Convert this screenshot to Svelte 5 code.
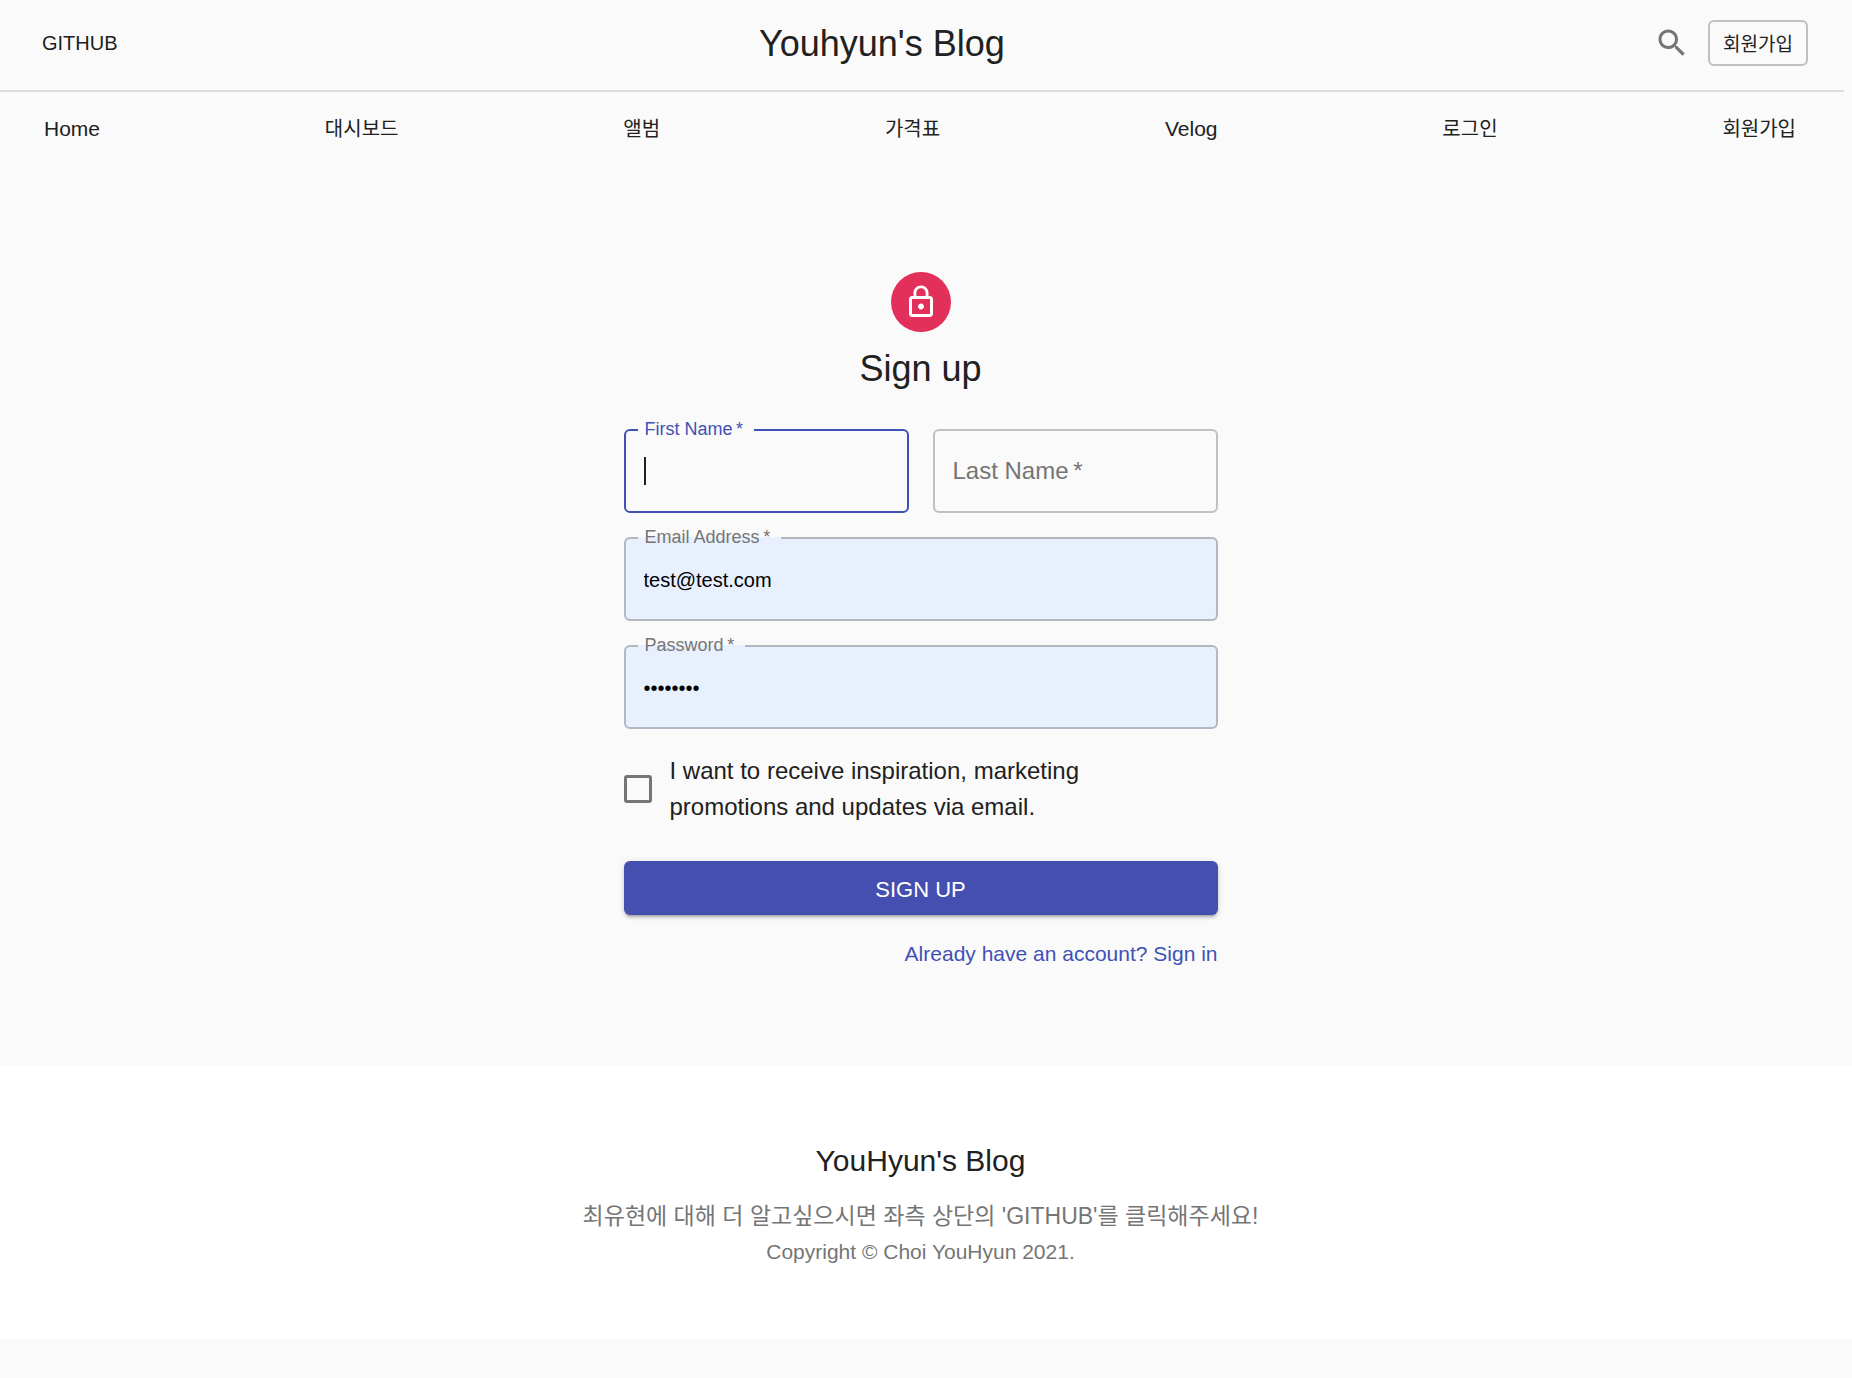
<script>
  const links = [
    { text: 'Home', ko: false },
    { text: '대시보드', ko: true },
    { text: '앨범', ko: true },
    { text: '가격표', ko: true },
    { text: 'Velog', ko: false },
    { text: '로그인', ko: true },
    { text: '회원가입', ko: true }
  ];
  let lastName = $state('');
</script>

<div class="page">
  <header class="toolbar">
    <button type="button" class="text-button">GITHUB</button>
    <h2 class="brand">Youhyun's Blog</h2>
    <button type="button" class="icon-button" aria-label="Search">
      <svg viewBox="0 0 24 24" width="36" height="36" aria-hidden="true">
        <path d="M15.5 14h-.79l-.28-.27C15.41 12.59 16 11.11 16 9.5 16 5.91 13.09 3 9.5 3S3 5.91 3 9.5 5.91 16 9.5 16c1.61 0 3.09-.59 4.23-1.57l.27.28v.79l5 4.99L20.49 19l-4.99-5zm-6 0C7.01 14 5 11.99 5 9.5S7.01 5 9.5 5 14 7.01 14 9.5 11.99 14 9.5 14z" />
      </svg>
    </button>
    <button type="button" class="outline-button">회원가입</button>
  </header>

  <nav class="sections">
    {#each links as link}
      <a href="#top" class:ko={link.ko}>{link.text}</a>
    {/each}
  </nav>

  <main>
    <div class="avatar">
      <svg viewBox="0 0 24 24" width="36" height="36" aria-hidden="true">
        <path d="M12 17c1.1 0 2-.9 2-2s-.9-2-2-2-2 .9-2 2 .9 2 2 2zm6-9h-1V6c0-2.76-2.24-5-5-5S7 3.24 7 6v2H6c-1.1 0-2 .9-2 2v10c0 1.1.9 2 2 2h12c1.1 0 2-.9 2-2V10c0-1.1-.9-2-2-2zM8.9 6c0-1.71 1.39-3.1 3.1-3.1s3.1 1.39 3.1 3.1v2H8.9V6zM18 20H6V10h12v10z" />
      </svg>
    </div>
    <h1>Sign up</h1>

    <form onsubmit={(e) => e.preventDefault()}>
      <div class="fields">
        <fieldset class="field focused">
          <legend><label for="first">First Name&thinsp;*</label></legend>
          <input id="first" type="text" autocomplete="off" />
          <span class="caret"></span>
        </fieldset>
        <div class="field plain">
          <input id="last" type="text" autocomplete="off" bind:value={lastName} />
          <label for="last" class:hidden={lastName !== ''}>Last Name&thinsp;*</label>
        </div>
        <fieldset class="field wide filled">
          <legend><label for="email">Email Address&thinsp;*</label></legend>
          <input id="email" type="email" value="test@test.com" autocomplete="off" />
        </fieldset>
        <fieldset class="field wide filled">
          <legend><label for="password">Password&thinsp;*</label></legend>
          <input id="password" type="password" value="testtest" autocomplete="off" />
        </fieldset>
      </div>

      <label class="consent">
        <input type="checkbox" />
        <span>I want to receive inspiration, marketing<br />promotions and updates via email.</span>
      </label>

      <button type="submit" class="submit">SIGN UP</button>
      <div class="signin"><a href="#signin">Already have an account? Sign in</a></div>
    </form>
  </main>

  <footer>
    <h2>YouHyun's Blog</h2>
    <p class="about">최유현에 대해 더 알고싶으시면 좌측 상단의 'GITHUB'를 클릭해주세요!</p>
    <p class="copyright">Copyright © Choi YouHyun 2021.</p>
  </footer>
</div>

<style>
  :global(body) {
    background: #fafafa;
  }
  .page {
    font-family: 'Liberation Sans', 'Noto Sans CJK KR', sans-serif;
    color: #212121;
  }
  .page :is(button, input) {
    font-family: inherit;
  }
  h1,
  h2,
  p {
    margin: 0;
    font-weight: 400;
  }
  a {
    text-decoration: none;
  }
  button {
    border: 0;
    background: none;
    color: inherit;
    cursor: pointer;
  }

  .toolbar {
    display: flex;
    align-items: center;
    height: 86px;
    margin-right: 8px;
    padding: 0 36px 4px;
    border-bottom: 2px solid #dcdcdc;
  }
  .text-button {
    padding: 8px 10px 8px 6px;
    font-size: 20px;
  }
  .brand {
    flex: 1;
    padding-top: 2px;
    text-align: center;
    font-size: 36px;
    line-height: 48px;
  }
  .icon-button {
    display: flex;
    padding: 18px;
    fill: #757575;
  }
  .outline-button {
    height: 46px;
    padding: 0 13px 2px;
    border: 2px solid #c0c0c0;
    border-radius: 6px;
    font-size: 19px;
  }

  .sections {
    display: flex;
    align-items: center;
    justify-content: space-between;
    height: 74px;
    margin-right: 8px;
    padding: 0 48px 0 44px;
  }
  .sections a {
    color: inherit;
    font-size: 21px;
    line-height: 30px;
  }
  .sections a.ko {
    font-size: 20px;
  }

  main {
    display: flex;
    flex-direction: column;
    align-items: center;
    margin-right: 11px;
    padding: 106px 0 96px;
  }
  .avatar {
    display: grid;
    place-items: center;
    width: 60px;
    height: 60px;
    border-radius: 50%;
    background: #e3305b;
    fill: #fff;
  }
  h1 {
    margin-top: 13px;
    font-size: 36px;
    line-height: 48px;
  }
  form {
    width: 100%;
    max-width: 594px;
    margin-top: 27px;
  }

  .fields {
    display: grid;
    grid-template-columns: 1fr 1fr;
    align-items: end;
    gap: 15px 24px;
  }
  .field {
    position: relative;
    box-sizing: border-box;
    min-width: 0;
    margin: 0;
    padding: 0;
    border: 2px solid #c0c0c0;
    border-radius: 6px;
  }
  .wide {
    grid-column: 1 / -1;
  }
  .field input {
    display: block;
    box-sizing: border-box;
    width: 100%;
    height: 80px;
    padding: 2px 18px 0;
    border: 0;
    outline: 0;
    background: none;
    color: #000;
    font-size: 20px;
  }
  .field legend {
    height: 20px;
    margin-left: 12px;
    padding: 0 11px 0 7px;
    color: #757575;
    font-size: 18px;
    line-height: 18px;
  }
  /* The legend takes 9px of the box below the border line. */
  .field legend + input {
    margin-top: -9px;
  }
  .focused {
    border-color: #3f51b5;
  }
  .focused legend {
    color: #3f51b5;
  }
  .filled {
    border-color: #b2b8c2;
    background: #e8f0fe;
  }
  .plain label {
    position: absolute;
    top: 0;
    left: 18px;
    color: #757575;
    font-size: 24px;
    line-height: 80px;
    pointer-events: none;
  }
  .plain label.hidden {
    visibility: hidden;
  }
  .caret {
    position: absolute;
    bottom: 26px;
    left: 18px;
    width: 2px;
    height: 28px;
    background: #212121;
  }

  .consent {
    display: flex;
    align-items: center;
    gap: 18px;
    margin-top: 24px;
    font-size: 24px;
    line-height: 36px;
  }
  .consent input {
    appearance: none;
    width: 28px;
    height: 28px;
    margin: 0;
    border: 3px solid #757575;
    border-radius: 3px;
  }
  .consent input:checked {
    background: #3f51b5;
    border-color: #3f51b5;
  }
  .submit {
    display: block;
    width: 100%;
    height: 54px;
    margin-top: 36px;
    padding: 3px 0 0;
    border-radius: 6px;
    background: #444fb0;
    box-shadow:
      0 4px 2px -3px rgba(0, 0, 0, 0.2),
      0 3px 3px rgba(0, 0, 0, 0.14),
      0 1px 7px rgba(0, 0, 0, 0.12);
    color: #fff;
    font-size: 22px;
  }
  .signin {
    margin-top: 24px;
    text-align: right;
    font-size: 21px;
    line-height: 30px;
  }
  .signin a {
    color: #3f51b5;
  }

  footer {
    padding: 72px 11px 72px 0;
    background: #fff;
    text-align: center;
  }
  footer h2 {
    margin-bottom: 10px;
    font-size: 30px;
    line-height: 48px;
  }
  .about {
    color: #757575;
    font-size: 23px;
    line-height: 42px;
  }
  .copyright {
    color: #757575;
    font-size: 21px;
    line-height: 30px;
  }
</style>
